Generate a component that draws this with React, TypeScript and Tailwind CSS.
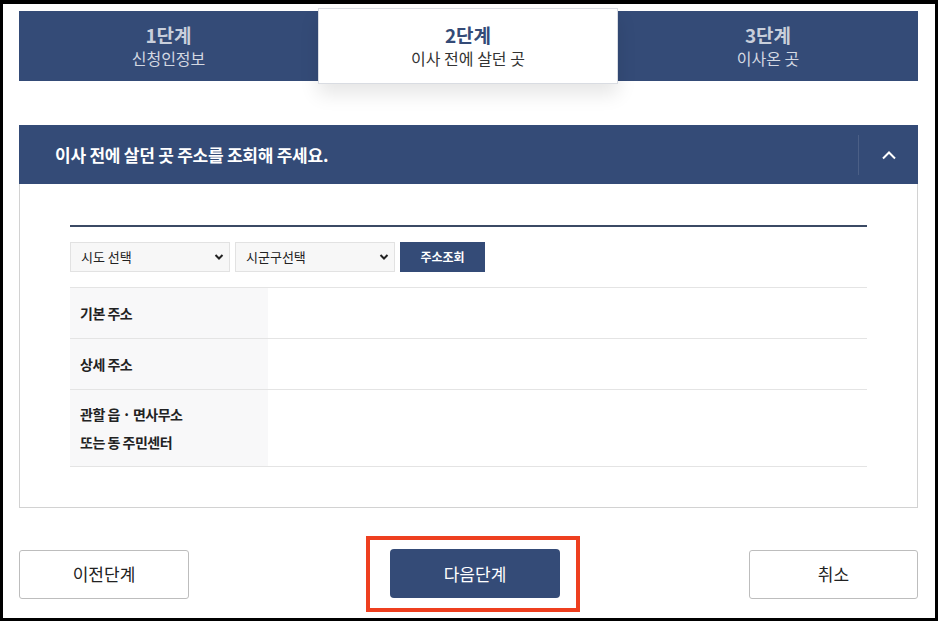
import React from 'react';

const NAVY = 'bg-[#344b77]';

const steps = [
  { no: '1단계', label: '신청인정보', active: false },
  { no: '2단계', label: '이사 전에 살던 곳', active: true },
  { no: '3단계', label: '이사온 곳', active: false },
];

const rows = [
  { label: ['기본 주소'], h: 'h-[51px]' },
  { label: ['상세 주소'], h: 'h-[51px]' },
  { label: ['관할 읍 · 면사무소', '또는 동 주민센터'], h: 'h-[77px]' },
];

const SelectBox: React.FC<{ text: string }> = ({ text }) => (
  <div className="relative w-[160px] h-[30px]">
    <select
      defaultValue=""
      className="appearance-none w-full h-full bg-[#f7f7f7] border border-[#e2e2e2] pl-[10px] text-[13px] text-[#222] outline-none"
    >
      <option value="">{text}</option>
    </select>
    <svg
      className="absolute right-[6px] top-[11px] pointer-events-none"
      width="10"
      height="8"
      viewBox="0 0 10 8"
      fill="none"
    >
      <path d="M1.5 2l3.5 3.5L8.5 2" stroke="#222" strokeWidth="2" />
    </svg>
  </div>
);

export default function App() {
  return (
    <div
      className="w-[938px] h-[621px] bg-white border-[3px] border-t-4 border-black pl-[16px] pr-[17px] pt-[4px] overflow-hidden"
      style={{ fontFamily: '"Noto Sans CJK KR", "Noto Sans", sans-serif' }}
    >
      {/* steps */}
      <div className="flex items-center h-[76px]">
        {steps.map((s) =>
          s.active ? (
            <div
              key={s.no}
              className="w-[300px] h-[76px] bg-white border border-[#d9dce2] shadow-[0_10px_18px_rgba(0,0,0,0.10)] flex flex-col items-center justify-center relative z-10"
            >
              <div className="text-[19px] font-bold leading-[24px] text-[#344b77]">{s.no}</div>
              <div className="text-[16px] leading-[22px] text-[#333]">{s.label}</div>
            </div>
          ) : (
            <div
              key={s.no}
              className={`${s.no === '1단계' ? 'w-[299px]' : 'w-[300px]'} h-[70px] ${NAVY} flex flex-col items-center justify-center`}
            >
              <div className="text-[19px] font-bold leading-[24px] text-[#c9cfdb]">{s.no}</div>
              <div className="text-[16px] leading-[22px] text-[#d3d8e2]">{s.label}</div>
            </div>
          )
        )}
      </div>

      {/* section header */}
      <div className={`mt-[41px] h-[59px] ${NAVY} flex items-center`}>
        <div className="flex-1 pl-[36px] text-[17px] font-bold text-white tracking-[-0.25px]">
          이사 전에 살던 곳 주소를 조회해 주세요.
        </div>
        <div className="w-px h-[40px] bg-[#4b5f86]" />
        <div className="w-[59px] flex items-center justify-center">
          <svg width="16" height="10" viewBox="0 0 16 10" fill="none">
            <path d="M2 8.5L8 2.5l6 6" stroke="#fff" strokeWidth="2" />
          </svg>
        </div>
      </div>

      {/* body */}
      <div className="border border-t-0 border-[#d2d2d2] px-[50px] pt-[41px] pb-[40px]">
        <div className="h-[2px] bg-[#3b4a64]" />
        <div className="flex items-center gap-[5px] mt-[15px]">
          <SelectBox text="시도 선택" />
          <SelectBox text="시군구선택" />
          <button className={`w-[85px] h-[30px] ${NAVY} text-white text-[12px] font-bold`}>주소조회</button>
        </div>
        <div className="mt-[15px] border-t border-[#e4e4e4]">
          {rows.map((r) => (
            <div key={r.label[0]} className={`flex ${r.h} border-b border-[#e4e4e4]`}>
              <div className="w-[198px] bg-[#f8f8f9] flex flex-col justify-center pl-[10px]">
                {r.label.map((l) => (
                  <div key={l} className="text-[14px] font-bold text-[#222] leading-[28px] tracking-[-0.5px]">
                    {l}
                  </div>
                ))}
              </div>
              <div className="flex-1" />
            </div>
          ))}
        </div>
      </div>

      {/* buttons */}
      <div className="flex items-center mt-[28px]">
        <button className="w-[170px] h-[49px] border border-[#bdbdbd] rounded-[3px] bg-white text-[17px] text-[#222]">
          이전단계
        </button>
        <div className="ml-[177px] w-[214px] h-[76px] border-4 border-[#ee3f1f] pl-[20px] pt-[9px]">
          <button className={`w-[170px] h-[49px] rounded-[4px] ${NAVY} text-white text-[17px]`}>다음단계</button>
        </div>
        <button className="ml-auto w-[169px] h-[49px] border border-[#bdbdbd] rounded-[3px] bg-white text-[17px] text-[#222]">
          취소
        </button>
      </div>
    </div>
  );
}
